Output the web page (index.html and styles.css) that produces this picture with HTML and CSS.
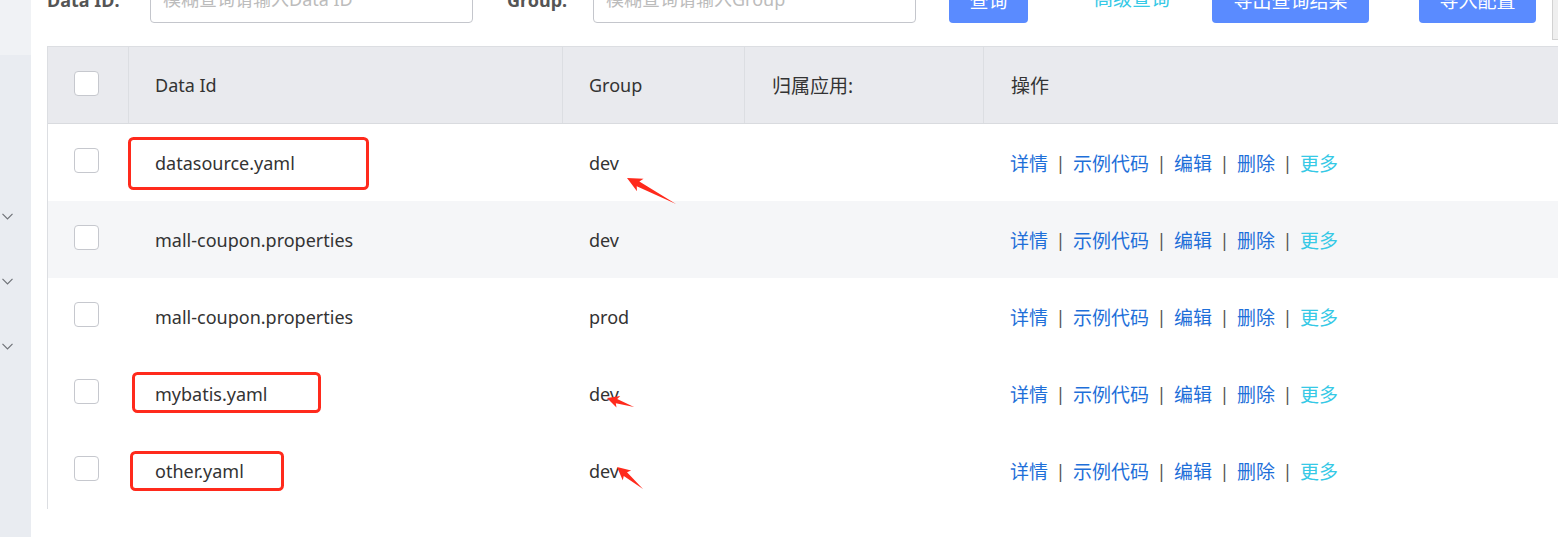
FILE: index.html
```html
<!DOCTYPE html>
<html lang="zh-CN">
<head>
<meta charset="utf-8">
<title>配置列表</title>
<link rel="stylesheet" href="styles.css">
</head>
<body>
<div class="app">
  <aside class="sidebar">
    <div class="side-top"></div>
    <ul class="side-menu">
      <li class="side-item"><svg class="chev" viewBox="0 0 11 7"><polyline points="0.5,0.8 5.5,5.8 10.5,0.8"/></svg></li>
      <li class="side-item"><svg class="chev" viewBox="0 0 11 7"><polyline points="0.5,0.8 5.5,5.8 10.5,0.8"/></svg></li>
      <li class="side-item"><svg class="chev" viewBox="0 0 11 7"><polyline points="0.5,0.8 5.5,5.8 10.5,0.8"/></svg></li>
    </ul>
  </aside>

  <main class="main">
    <div class="toolbar">
      <label class="lbl lbl-id">Data ID:</label>
      <input class="input" type="text" placeholder="模糊查询请输入Data ID">
      <label class="lbl lbl-group">Group:</label>
      <input class="input" type="text" placeholder="模糊查询请输入Group">
      <button class="btn btn-query">查询</button>
      <a class="adv">高级查询</a>
      <button class="btn btn-export">导出查询结果</button>
      <button class="btn btn-import">导入配置</button>
      <div class="edge-box"></div>
    </div>

    <div class="table">
      <div class="row head">
        <div class="cell cell-cb"><span class="cb"></span></div>
        <div class="cell">Data Id</div>
        <div class="cell">Group</div>
        <div class="cell cjk">归属应用:</div>
        <div class="cell cjk">操作</div>
      </div>

      <div class="row">
        <div class="cell cell-cb"><span class="cb"></span></div>
        <div class="cell">datasource.yaml</div>
        <div class="cell">dev</div>
        <div class="cell"></div>
        <div class="cell ops"><a class="op">详情</a><span class="sep">|</span><a class="op">示例代码</a><span class="sep">|</span><a class="op">编辑</a><span class="sep">|</span><a class="op">删除</a><span class="sep">|</span><a class="op more">更多</a></div>
      </div>

      <div class="row alt">
        <div class="cell cell-cb"><span class="cb"></span></div>
        <div class="cell">mall-coupon.properties</div>
        <div class="cell">dev</div>
        <div class="cell"></div>
        <div class="cell ops"><a class="op">详情</a><span class="sep">|</span><a class="op">示例代码</a><span class="sep">|</span><a class="op">编辑</a><span class="sep">|</span><a class="op">删除</a><span class="sep">|</span><a class="op more">更多</a></div>
      </div>

      <div class="row">
        <div class="cell cell-cb"><span class="cb"></span></div>
        <div class="cell">mall-coupon.properties</div>
        <div class="cell">prod</div>
        <div class="cell"></div>
        <div class="cell ops"><a class="op">详情</a><span class="sep">|</span><a class="op">示例代码</a><span class="sep">|</span><a class="op">编辑</a><span class="sep">|</span><a class="op">删除</a><span class="sep">|</span><a class="op more">更多</a></div>
      </div>

      <div class="row">
        <div class="cell cell-cb"><span class="cb"></span></div>
        <div class="cell">mybatis.yaml</div>
        <div class="cell">dev</div>
        <div class="cell"></div>
        <div class="cell ops"><a class="op">详情</a><span class="sep">|</span><a class="op">示例代码</a><span class="sep">|</span><a class="op">编辑</a><span class="sep">|</span><a class="op">删除</a><span class="sep">|</span><a class="op more">更多</a></div>
      </div>

      <div class="row">
        <div class="cell cell-cb"><span class="cb"></span></div>
        <div class="cell">other.yaml</div>
        <div class="cell">dev</div>
        <div class="cell"></div>
        <div class="cell ops"><a class="op">详情</a><span class="sep">|</span><a class="op">示例代码</a><span class="sep">|</span><a class="op">编辑</a><span class="sep">|</span><a class="op">删除</a><span class="sep">|</span><a class="op more">更多</a></div>
      </div>
    </div>
  </main>

  <svg class="annot" viewBox="0 0 1558 537" width="1558" height="537">
    <g class="mark-box">
      <rect x="129.5" y="138.5" width="238" height="50" rx="4"/>
      <rect x="133.5" y="373.5" width="186" height="38" rx="4"/>
      <rect x="131.5" y="452.5" width="151" height="37" rx="4"/>
    </g>
    <g class="mark-arrow">
      <polygon transform="translate(627,178) rotate(207.95)" points="0,0 -15,-7 -12.5,-2.8 -55.5,0 -12.5,2.8 -15,7"/>
      <polygon transform="translate(607,398) rotate(198.4)" points="0,0 -12,-6 -10,-2.2 -28.5,0 -10,2.2 -12,6"/>
      <polygon transform="translate(617,467) rotate(220.2)" points="0,0 -13,-6.5 -11,-2.5 -34,0 -11,2.5 -13,6.5"/>
    </g>
  </svg>
</div>
</body>
</html>
```

FILE: styles.css
```css
html, body {
  margin: 0;
  height: 537px;
  overflow: hidden;
  background: #fff;
  font-family: "Noto Sans", "Noto Sans CJK SC", sans-serif;
  color: #333;
}

.app {
  position: relative;
  display: flex;
  height: 537px;
}

/* sidebar */
.sidebar {
  width: 31px;
  flex: none;
  background: #e9ecf1;
  display: flex;
  flex-direction: column;
}
.side-top {
  height: 55px;
  background: #f0f2f5;
}
.side-menu {
  list-style: none;
  margin: 129px 0 0;
  padding: 0;
}
.side-item {
  height: 65px;
  display: flex;
  align-items: center;
  padding-left: 2px;
}
.chev {
  width: 11px;
  height: 7px;
}
.chev polyline {
  fill: none;
  stroke: #6f7378;
  stroke-width: 1.2;
}

/* main */
.main {
  flex: 1;
  min-width: 0;
  padding-left: 16px;
  overflow: hidden;
}

.toolbar {
  display: flex;
  align-items: flex-end;
  height: 50px;
  margin-top: -27px;
}
.toolbar > * {
  flex: none;
}
.lbl {
  height: 46px;
  line-height: 46px;
  font-size: 18px;
  font-weight: 700;
  color: #555;
}
.lbl-id {
  width: 103px;
}
.lbl-group {
  margin-left: 34px;
  width: 86px;
}
.input {
  width: 323px;
  height: 49px;
  box-sizing: border-box;
  border: 1px solid #c4c6cc;
  border-radius: 4px;
  padding: 0 12px;
  font-family: "Noto Sans", "Noto Sans CJK SC", sans-serif;
  font-size: 18px;
  color: #333;
  outline: none;
  background: #fff;
}
.input::placeholder {
  color: #bcbcbc;
}
.btn {
  height: 47px;
  border: 0;
  border-radius: 4px;
  background: #5a8bff;
  color: #fff;
  font-family: "Noto Sans CJK SC", "Noto Sans", sans-serif;
  font-size: 19px;
  padding: 0;
}
.btn-query {
  margin-left: 33px;
  width: 79px;
}
.adv {
  margin-left: 66px;
  width: 76px;
  height: 47px;
  line-height: 47px;
  color: #36c9e6;
  font-size: 19px;
}
.btn-export {
  margin-left: 42px;
  width: 157px;
}
.btn-import {
  margin-left: 50px;
  width: 117px;
}
.edge-box {
  align-self: flex-start;
  margin-left: 16px;
  width: 12px;
  height: 67px;
  box-sizing: border-box;
  border: 1px solid #d2d2d2;
  background: #efefef;
}

/* table */
.table {
  margin-top: 23px;
  border-top: 1px solid #dcdee2;
  border-left: 1px solid #dcdee2;
}
.row {
  display: grid;
  grid-template-columns: 80px 434px 182px 239px 1fr;
  height: 77px;
  font-size: 18px;
  color: #333;
}
.row.alt {
  background: #f5f6f8;
}
.row.head {
  height: 76px;
  background: #e9eaee;
  border-bottom: 1px solid #d9dbdf;
}
.cell {
  display: flex;
  align-items: center;
  padding-left: 27px;
  white-space: nowrap;
  min-width: 0;
}
.head .cell + .cell {
  box-shadow: inset 1px 0 0 #dcdee2;
}
.cjk {
  font-size: 19px;
  padding-left: 28px;
}
.cell-cb {
  justify-content: center;
  padding-left: 0;
}
.cb {
  width: 25px;
  height: 25px;
  box-sizing: border-box;
  border: 1px solid #c6c8ce;
  border-radius: 4px;
  background: #fff;
  margin: -4px 0 0 -3px;
}
.ops {
  font-size: 19px;
}
.op {
  color: #1e6fd9;
}
.op.more {
  color: #36c9e6;
}
.sep {
  display: inline-block;
  width: 25px;
  text-align: center;
  color: #555;
  font-family: "Noto Sans", sans-serif;
  font-size: 18px;
}

/* annotation overlay */
.annot {
  position: absolute;
  left: 0;
  top: 0;
  pointer-events: none;
}
.mark-box rect {
  fill: none;
  stroke: #ff2a1c;
  stroke-width: 3;
}
.mark-arrow polygon {
  fill: #ff2a1c;
}
```
